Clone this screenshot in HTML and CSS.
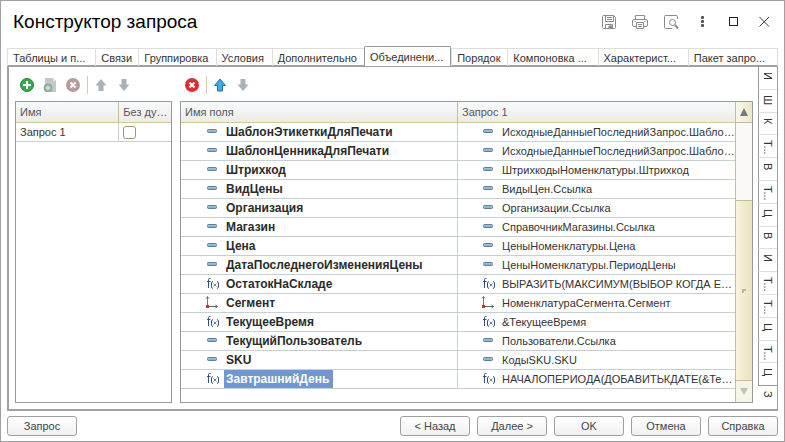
FILE: index.html
```
<!DOCTYPE html>
<html lang="ru">
<head>
    <meta charset="UTF-8">
    <meta name="viewport" content="width=device-width, initial-scale=1.0">
    <title>Конструктор запроса</title>
    <link rel="stylesheet" href="styles.css">
</head>
<body>
    <svg class="sprite" aria-hidden="true">
        <defs>
            <linearGradient id="blue" x1="0" y1="0" x2="0" y2="1">
                <stop offset="0" stop-color="#4f7fa3"/>
                <stop offset="0.45" stop-color="#b4d5e8"/>
                <stop offset="1" stop-color="#5585a5"/>
            </linearGradient>
        </defs>
        <symbol id="field" viewBox="0 0 14 14">
            <rect x="2.5" y="5.5" width="9" height="3" rx="1" fill="url(#blue)" stroke="#5b8099"/>
        </symbol>
        <symbol id="func" viewBox="0 0 14 14">
            <path d="M5.5 2.5H4.5Q3.5 2.5 3.5 3.5V12M2 5.5H5.5" fill="none" stroke="#33507d"/>
            <path d="M8 5.5Q6.5 6 6.5 7V11Q6.5 12 8 12.500M12 5.500Q13.500 6 13.500 7V11Q13.500 12 12 12.500" fill="none" stroke="#33507d"/>
            <path d="M8.500 7.500L11.500 10.500M11.500 7.500L8.500 10.500" stroke="#6d87ab"/>
        </symbol>
        <symbol id="axes" viewBox="0 0 14 14">
            <path d="M2.500 10V1.500M1 3.500L2.500 1.500L4 3.500" fill="none" stroke="#777"/>
            <path d="M4 11.500H12.500M10.500 10L12.500 11.500L10.500 13" fill="none" stroke="#666"/>
            <rect x="1" y="10" width="3" height="3" fill="#c8322e"/>
        </symbol>
        <symbol id="up" viewBox="0 0 14 14">
            <path d="M7 1L12.500 7.500H9.500V13H4.500V7.500H1.500Z"/>
        </symbol>
        <symbol id="down" viewBox="0 0 14 14">
            <path d="M7 13L12.500 6.500H9.500V1H4.500V6.500H1.500Z"/>
        </symbol>
        <symbol id="cross" viewBox="0 0 14 14">
            <circle cx="7" cy="7" r="7"/>
            <path d="M4.500 4.500L9.500 9.500M9.500 4.500L4.500 9.500" stroke="#fff" stroke-width="2"/>
        </symbol>
    </svg>

    <div class="window">
        <header class="title-bar">
            <h1>Конструктор запроса</h1>
            <div class="window-tools">
                <button type="button" aria-label="Сохранить">
                    <svg width="16" height="16" viewBox="0 0 16 16" fill="none" stroke="#8a8a8a">
                        <path d="M2.500 1.500H12.500L14.500 3.500V13.500Q14.500 14.500 13.500 14.500H2.500Q1.500 14.500 1.500 13.500V2.500Q1.500 1.500 2.500 1.500Z"/>
                        <path d="M4.500 1.500V7.500H12.500V1.500M6 3.500H11M6 5.500H11M4.500 14.500V10.500H11.500V14.500"/>
                        <path d="M8 12H11V14H8Z" fill="#8a8a8a"/>
                    </svg>
                </button>
                <button type="button" aria-label="Печать">
                    <svg width="16" height="16" viewBox="0 0 16 16" fill="none" stroke="#8a8a8a">
                        <path d="M3.500 5.500V1.500H12.500V5.500M4.500 12.500H2Q0.500 12.500 0.500 11V7Q0.500 5.500 2 5.500H14Q15.500 5.500 15.500 7V11Q15.500 12.500 14 12.500H11.500"/>
                        <path d="M4.500 8.500H11.500V14.500H4.500ZM6 10.500H10M6 12.500H10M2.500 7.500H3.500M12.500 7.500H13.500"/>
                    </svg>
                </button>
                <button type="button" aria-label="Просмотр">
                    <svg width="16" height="16" viewBox="0 0 16 16" fill="none" stroke="#8a8a8a">
                        <path d="M14.500 5V2.500Q14.500 1.500 13.500 1.500H2.500Q1.500 1.500 1.500 2.500V13.500Q1.500 14.500 2.500 14.500H9"/>
                        <circle cx="9.500" cy="8.500" r="3"/>
                        <path d="M12 11L15 14.500" stroke-width="2"/>
                    </svg>
                </button>
                <button type="button" aria-label="Ещё">
                    <svg width="16" height="16" viewBox="0 0 16 16" fill="#555">
                        <rect x="7" y="2" width="3" height="3" rx="1"/>
                        <rect x="7" y="6" width="3" height="3" rx="1"/>
                        <rect x="7" y="10" width="3" height="3" rx="1"/>
                    </svg>
                </button>
                <button type="button" aria-label="Развернуть">
                    <svg width="16" height="16" viewBox="0 0 16 16" fill="none" stroke="#222">
                        <rect x="4.500" y="3.500" width="8" height="8"/>
                    </svg>
                </button>
                <button type="button" aria-label="Закрыть">
                    <svg width="16" height="16" viewBox="0 0 16 16" fill="none" stroke="#333">
                        <path d="M3.500 3L13 12.500M13 3L3.500 12.500"/>
                    </svg>
                </button>
            </div>
        </header>

        <nav class="tabs">
            <button type="button">Таблицы и п...</button>
            <button type="button">Связи</button>
            <button type="button">Группировка</button>
            <button type="button">Условия</button>
            <button type="button">Дополнительно</button>
            <button type="button" class="active">Объединени...</button>
            <button type="button">Порядок</button>
            <button type="button">Компоновка ...</button>
            <button type="button">Характерист...</button>
            <button type="button">Пакет запро...</button>
        </nav>

        <main class="panel">
            <section class="queries">
                <div class="toolbar">
                    <button type="button" aria-label="Добавить">
                        <svg width="14" height="14" viewBox="0 0 14 14">
                            <circle cx="7" cy="7" r="6.500" fill="#35ab4c" stroke="#238038"/>
                            <path d="M7 3V11M3 7H11" stroke="#fff" stroke-width="2"/>
                        </svg>
                    </button>
                    <button type="button" aria-label="Скопировать">
                        <svg width="14" height="14" viewBox="0 0 14 14">
                            <path d="M2 0H10L13 3V14H2Z" fill="#c3c8ca"/>
                            <path d="M10 0V3H13" fill="#e4e7e8"/>
                            <circle cx="5" cy="10" r="4" fill="#a0b8a4" stroke="#8ba48f"/>
                            <path d="M5 8V12M3 10H7" stroke="#e9f0ea"/>
                        </svg>
                    </button>
                    <button type="button" aria-label="Удалить запрос">
                        <svg class="cross-off" width="14" height="14"><use href="#cross"/></svg>
                    </button>
                    <span class="divider"></span>
                    <button type="button" aria-label="Запрос вверх">
                        <svg class="arrow-off" width="14" height="14"><use href="#up"/></svg>
                    </button>
                    <button type="button" aria-label="Запрос вниз">
                        <svg class="arrow-off" width="14" height="14"><use href="#down"/></svg>
                    </button>
                </div>
                <div class="grid-box">
                    <table class="query-table">
                        <thead>
                            <tr><th>Имя</th><th>Без ду…</th></tr>
                        </thead>
                        <tbody>
                            <tr>
                                <td><label for="distinct">Запрос 1</label></td>
                                <td><input type="checkbox" id="distinct"></td>
                            </tr>
                        </tbody>
                    </table>
                </div>
            </section>

            <section class="fields">
                <div class="toolbar">
                    <button type="button" aria-label="Удалить поле">
                        <svg class="cross-on" width="14" height="14"><use href="#cross"/></svg>
                    </button>
                    <span class="divider"></span>
                    <button type="button" aria-label="Поле вверх">
                        <svg class="arrow-on" width="14" height="14"><use href="#up"/></svg>
                    </button>
                    <button type="button" aria-label="Поле вниз">
                        <svg class="arrow-off" width="14" height="14"><use href="#down"/></svg>
                    </button>
                </div>
                <div class="grid-box">
                    <table class="field-table">
                        <thead>
                            <tr><th>Имя поля</th><th>Запрос 1</th></tr>
                        </thead>
                        <tbody>
                            <tr>
                                <td><svg><use href="#field"/></svg><b>ШаблонЭтикеткиДляПечати</b></td>
                                <td><svg><use href="#field"/></svg><span>ИсходныеДанныеПоследнийЗапрос.Шабло…</span></td>
                            </tr>
                            <tr>
                                <td><svg><use href="#field"/></svg><b>ШаблонЦенникаДляПечати</b></td>
                                <td><svg><use href="#field"/></svg><span>ИсходныеДанныеПоследнийЗапрос.Шабло…</span></td>
                            </tr>
                            <tr>
                                <td><svg><use href="#field"/></svg><b>Штрихкод</b></td>
                                <td><svg><use href="#field"/></svg><span>ШтрихкодыНоменклатуры.Штрихкод</span></td>
                            </tr>
                            <tr>
                                <td><svg><use href="#field"/></svg><b>ВидЦены</b></td>
                                <td><svg><use href="#field"/></svg><span>ВидыЦен.Ссылка</span></td>
                            </tr>
                            <tr>
                                <td><svg><use href="#field"/></svg><b>Организация</b></td>
                                <td><svg><use href="#field"/></svg><span>Организации.Ссылка</span></td>
                            </tr>
                            <tr>
                                <td><svg><use href="#field"/></svg><b>Магазин</b></td>
                                <td><svg><use href="#field"/></svg><span>СправочникМагазины.Ссылка</span></td>
                            </tr>
                            <tr>
                                <td><svg><use href="#field"/></svg><b>Цена</b></td>
                                <td><svg><use href="#field"/></svg><span>ЦеныНоменклатуры.Цена</span></td>
                            </tr>
                            <tr>
                                <td><svg><use href="#field"/></svg><b>ДатаПоследнегоИзмененияЦены</b></td>
                                <td><svg><use href="#field"/></svg><span>ЦеныНоменклатуры.ПериодЦены</span></td>
                            </tr>
                            <tr>
                                <td><svg><use href="#func"/></svg><b>ОстатокНаСкладе</b></td>
                                <td><svg><use href="#func"/></svg><span>ВЫРАЗИТЬ(МАКСИМУМ(ВЫБОР КОГДА Е…</span></td>
                            </tr>
                            <tr>
                                <td><svg><use href="#axes"/></svg><b>Сегмент</b></td>
                                <td><svg><use href="#axes"/></svg><span>НоменклатураСегмента.Сегмент</span></td>
                            </tr>
                            <tr>
                                <td><svg><use href="#func"/></svg><b>ТекущееВремя</b></td>
                                <td><svg><use href="#func"/></svg><span>&amp;ТекущееВремя</span></td>
                            </tr>
                            <tr>
                                <td><svg><use href="#field"/></svg><b>ТекущийПользователь</b></td>
                                <td><svg><use href="#field"/></svg><span>Пользователи.Ссылка</span></td>
                            </tr>
                            <tr>
                                <td><svg><use href="#field"/></svg><b>SKU</b></td>
                                <td><svg><use href="#field"/></svg><span>КодыSKU.SKU</span></td>
                            </tr>
                            <tr>
                                <td><svg><use href="#func"/></svg><b class="selected">ЗавтрашнийДень</b></td>
                                <td><svg><use href="#func"/></svg><span>НАЧАЛОПЕРИОДА(ДОБАВИТЬКДАТЕ(&amp;Те…</span></td>
                            </tr>
                        </tbody>
                    </table>
                    <div class="scrollbar">
                        <button type="button" class="scroll-up" aria-label="Прокрутить вверх">
                            <svg width="8" height="8"><path d="M4 0L8 8H0Z" fill="#777"/></svg>
                        </button>
                        <div class="track"></div>
                        <div class="thumb"><i></i></div>
                        <button type="button" class="scroll-down" aria-label="Прокрутить вниз">
                            <svg width="8" height="8"><path d="M4 7L8 0H0Z" fill="#c3c0b0"/></svg>
                        </button>
                    </div>
                </div>
            </section>

            <nav class="side-tabs">
                <button type="button">И</button>
                <button type="button">Ш</button>
                <button type="button">К</button>
                <button type="button">Т...</button>
                <button type="button">В</button>
                <button type="button">Т...</button>
                <button type="button">Ц</button>
                <button type="button">В</button>
                <button type="button">И</button>
                <button type="button">Т...</button>
                <button type="button">Т...</button>
                <button type="button">Ц</button>
                <button type="button">Т...</button>
                <button type="button">Ц</button>
                <button type="button" class="active">З</button>
            </nav>
        </main>

        <footer class="actions">
            <button type="button" class="query-button">Запрос</button>
            <button type="button">&lt; Назад</button>
            <button type="button">Далее &gt;</button>
            <button type="button">OK</button>
            <button type="button">Отмена</button>
            <button type="button">Справка</button>
        </footer>
    </div>
</body>
</html>
```
FILE: styles.css
```
* {
    box-sizing: border-box;
}

body {
    margin: 0;
    background-color: #fff;
    color: #333;
    font-family: "Liberation Sans", Arial, sans-serif;
    font-size: 11px;
    line-height: 16px;
}

button {
    padding: 0;
    border: none;
    background: none;
    color: inherit;
    font: inherit;
}

.sprite {
    position: absolute;
    width: 0;
    height: 0;
}

.window {
    display: flex;
    flex-direction: column;
    min-height: 100vh;
    padding: 0 6px 5px;
    border: 1px solid #a0a0a0;
}

/* title */
.title-bar {
    display: flex;
    justify-content: space-between;
    height: 45px;
    padding: 8px 6px 0;
}

h1 {
    margin: 0;
    color: #000;
    font-size: 19px;
    font-weight: normal;
    line-height: 26px;
}

.window-tools {
    display: flex;
    align-items: center;
    gap: 15px;
    height: 26px;
}

.window-tools svg,
.toolbar svg {
    display: block;
}

/* tabs */
.tabs {
    display: grid;
    grid-template-columns: 88fr 43fr 77fr 56fr 92fr 87fr 56fr 90fr 90fr 90fr;
    align-items: end;
    height: 20px;
    margin-bottom: -1px;
    position: relative;
}

.tabs button {
    min-width: 0;
    height: 18px;
    padding: 0 5px;
    border: 1px solid #dedede;
    border-width: 1px 0 0 1px;
    text-align: left;
    white-space: nowrap;
}

.tabs button:last-child {
    border-right-width: 1px;
}

.tabs .active {
    height: 20px;
    border: 1px solid #999;
    border-bottom: none;
    border-radius: 2px 2px 0 0;
    background-color: #fff;
}

.panel {
    display: flex;
    flex: 1;
    border: 2px solid #a0a0a0;
    border-right-width: 1px;
}

.queries,
.fields {
    display: flex;
    flex-direction: column;
    padding-bottom: 6px;
}

.queries {
    flex: 157;
    margin: 0 8px 0 6px;
}

.fields {
    flex: 573;
    margin-right: 5px;
}

.toolbar {
    display: flex;
    align-items: center;
    gap: 9px;
    height: 34px;
    padding: 2px 5px 0;
}

.divider {
    width: 1px;
    height: 18px;
    margin: 0 -3px 0 -2px;
    background-color: #d2cbb0;
}

.arrow-off {
    fill: #a9b3b9;
}

.arrow-on {
    fill: #3fa9ea;
    stroke: #2a6f9f;
}

.cross-on {
    fill: #df2d30;
}

.cross-off {
    fill: #b89c9c;
}

/* tables */
.grid-box {
    display: flex;
    flex: 1;
    align-items: flex-start;
    border: 1px solid #999;
}

table {
    flex: 1;
    width: 100%;
    min-width: 0;
    table-layout: fixed;
    border-collapse: separate;
    border-spacing: 0;
}

th,
td {
    overflow: hidden;
    padding: 0 4px;
    white-space: nowrap;
    text-align: left;
}

th {
    height: 21px;
    border-bottom: 1px solid #d0c8a4;
    background: linear-gradient(#f6f9fc, #f2f2f2 55%, #efebe1);
    color: #555;
    font-weight: normal;
}

th + th {
    border-left: 1px solid #c5bd98;
}

td {
    height: 19px;
    border-bottom: 1px solid #c5d0d6;
}

td + td {
    border-left: 1px solid #c5d0d6;
}

.query-table th:first-child {
    width: 66%;
}

.query-table input {
    display: block;
    appearance: none;
    width: 13px;
    height: 13px;
    margin: 0;
    border: 1px solid #9c9575;
    border-radius: 3px;
    background-color: #fff;
}

.field-table th:first-child {
    width: 276px;
}

.field-table td {
    padding: 0 0 0 21px;
}

.field-table td + td {
    padding-left: 20px;
}

.field-table svg {
    float: left;
    width: 14px;
    height: 14px;
    margin: 1px 5px 1px 3px;
}

.field-table td b,
.field-table td span {
    display: inline-block;
    height: 18px;
    padding: 0 0 0 2px;
    line-height: 18px;
    vertical-align: top;
}

.field-table b {
    color: #2b2b2b;
    font-size: 12px;
}

.field-table td .selected {
    padding-right: 4px;
    background-color: #7097d0;
    color: #fff;
}

/* scrollbar */
.scrollbar {
    display: flex;
    flex-direction: column;
    align-self: stretch;
    width: 17px;
    border-left: 1px solid #c5bd98;
}

.scrollbar button {
    display: flex;
    align-items: center;
    justify-content: center;
    height: 21px;
    background: linear-gradient(to right, #faf8ee, #ece6c8);
}

.scrollbar .scroll-up {
    border-bottom: 1px solid #c5bd98;
}

.scrollbar .scroll-down {
    background: #f7f5ea;
}

.track {
    flex: 78;
    background-color: #faf9f5;
}

.thumb {
    display: flex;
    flex: 181;
    align-items: center;
    justify-content: center;
    border: 1px solid #c5bd98;
    border-width: 1px 0;
    background: linear-gradient(to right, #f8f4de, #eae3bd);
}

.thumb i {
    width: 4px;
    height: 4px;
    border: 1px solid #bcb997;
    border-width: 2px 0 0 2px;
}

/* vertical tabs */
.side-tabs {
    display: flex;
    flex-direction: column;
    width: 19px;
}

.side-tabs button {
    flex: 1;
    min-height: 22px;
    padding: 5px 0 0;
    border-left: 1px solid #999;
    border-bottom: 1px solid #dedede;
    line-height: 16px;
    text-align: left;
    writing-mode: vertical-rl;
}

.side-tabs button:nth-last-child(2) {
    border-bottom-color: #999;
}

.side-tabs .active {
    border-color: transparent;
}

/* footer */
.actions {
    display: flex;
    gap: 7px;
    padding-top: 5px;
}

.actions button {
    width: 70px;
    height: 20px;
    border: 1px solid #a0a0a0;
    border-radius: 3px;
    background: linear-gradient(#fff, #f0f0f0);
    color: #444;
}

.actions .query-button {
    margin-right: auto;
}
```
